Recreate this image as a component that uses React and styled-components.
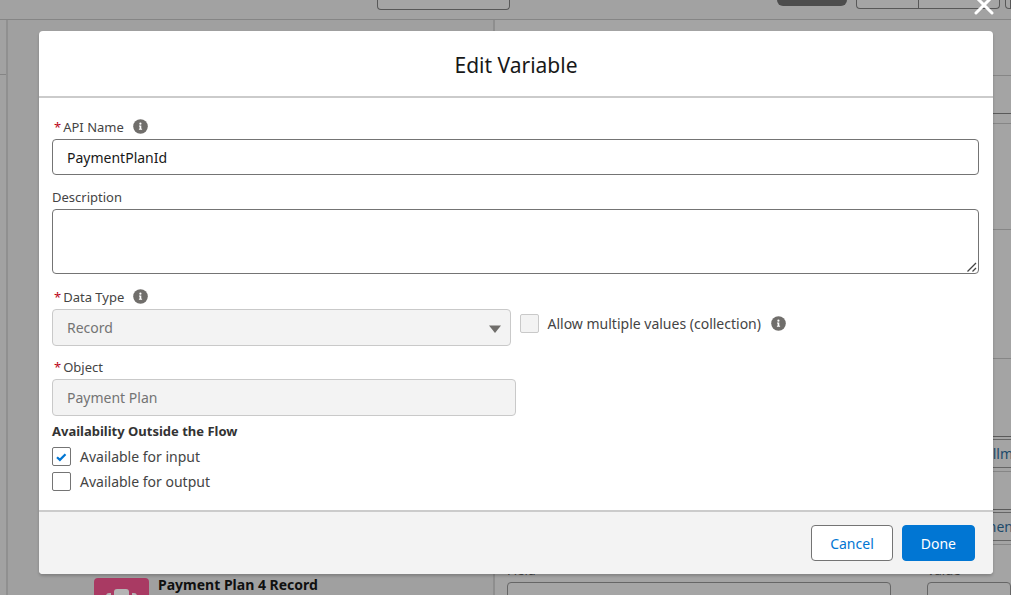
import React from "react";
import styled, { createGlobalStyle, css } from "styled-components";

const GlobalStyle = createGlobalStyle`
  *, *::before, *::after { box-sizing: border-box; }
  body { margin: 0; }
  body, button, input, textarea, select {
    font-family: "Noto Sans", "Open Sans", sans-serif;
    font-size: 14px;
  }
`;

const Page = styled.div`
  position: relative;
  display: flex;
  flex-direction: column;
  height: 100vh;
  overflow: hidden;
  background: #a2a2a2;
  color: #444;
`;

/* Flow builder behind the dialog */
const Toolbar = styled.header`
  display: flex;
  flex: none;
  align-items: flex-start;
  height: 20px;
  padding-left: 377px;
  border-bottom: 1px solid #858585;
`;

const ToolbarButton = styled.button`
  flex: none;
  width: ${(p) => p.$width}px;
  height: ${(p) => p.$height || 9}px;
  padding: 0;
  margin-left: ${(p) => p.$gap || 0}px;
  border: 1px solid #585858;
  border-top: 0;
  border-left-width: ${(p) => (p.$joined ? 0 : 1)}px;
  border-radius: ${(p) => p.$radius || "0 0 4px 4px"};
  background: #a5a5a5;
`;

const StatusPill = styled.span`
  width: 70px;
  height: 6px;
  margin-left: auto;
  border-radius: 0 0 12px 12px;
  background: #4d4d4d;
`;

const Workspace = styled.div`
  display: flex;
  flex: 1;
  min-height: 0;
`;

const Rail = styled.aside`
  flex: none;
  width: 8px;
  border-right: 2px solid #909090;
`;

const RailHeader = styled.div`
  height: 55px;
  border-bottom: 1px solid #858585;
`;

const Canvas = styled.section`
  position: relative;
  flex: none;
  width: 485px;
  overflow: hidden;
  background: #a0a0a0;
`;

const FlowNode = styled.div`
  position: absolute;
  left: 86px;
  top: 558px;
  display: flex;
  gap: 9px;
  color: #101010;
  font-size: 14px;
  font-weight: 700;
  line-height: 13px;
  white-space: nowrap;
`;

const NodeIcon = styled.span`
  display: block;
  width: 55px;
  height: 55px;
  border-radius: 4px;
  background: #a93a63;
`;

const Panel = styled.aside`
  flex: 1;
  min-width: 0;
  overflow: hidden;
  border-left: 2px solid #8e8e8e;
  background: #a4a4a4;
`;

const PanelSection = styled.div`
  height: ${(p) => p.$height}px;
  border-bottom: 1px solid ${(p) => (p.$strong ? "#5a5a5a" : "#868686")};
`;

const ResourceRow = styled.div`
  display: flex;
  align-items: center;
  justify-content: flex-end;
  height: 29px;
  margin: 2px -2px 3px 0;
  border: solid #666;
  border-width: 1px 0;
`;

const ResourceLink = styled.a`
  color: #1d4a6b;
  text-decoration: none;
`;

const Assignment = styled.div`
  display: grid;
  grid-template-columns: 384px 1fr;
  gap: 36px;
  padding: 17px 0 0 12px;
`;

const AssignmentField = styled.label`
  display: flex;
  flex-direction: column;
  gap: 4px;
  font-size: 13px;
  line-height: 16px;
`;

const AssignmentInput = styled.input`
  width: 100%;
  height: 36px;
  border: 1px solid #666;
  border-radius: 4px;
  background: #a5a5a5;
`;

/* Dialog */
const Overlay = styled.div`
  position: absolute;
  inset: 0;
  padding: 31px 18px 21px 39px;
`;

const CloseButton = styled.button`
  position: absolute;
  top: -5px;
  right: 17px;
  width: 20px;
  height: 20px;
  padding: 0;
  border: 0;
  background: none;
  svg { display: block; }
`;

const Dialog = styled.form`
  border-radius: 4px;
  background: #fff;
  box-shadow: 0 2px 3px rgba(0, 0, 0, 0.2);
`;

const DialogHeader = styled.header`
  padding: 21px 16px 18px;
  border-bottom: 2px solid #cbcbcb;
  text-align: center;
`;

const Title = styled.h2`
  margin: 0;
  color: #181818;
  font-size: 21px;
  font-weight: 400;
  line-height: 26px;
`;

const DialogBody = styled.div`
  padding: 19px 14px 16px 13px;
`;

const Field = styled.div`
  display: flex;
  flex-direction: column;
`;

const LabelRow = styled.div`
  display: flex;
  align-items: center;
  gap: 9px;
  height: 22px;
  margin-top: ${(p) => p.$gap || 0}px;
  padding-bottom: 3px;
`;

const Label = styled.label`
  color: #444;
  font-size: 13px;
  line-height: 20px;
`;

const Required = styled.abbr`
  margin: 0 2px;
  color: #ba0517;
`;

const control = css`
  display: block;
  width: 100%;
  border: 1px solid #747474;
  border-radius: 4px;
  background: #fff;
  color: #181818;
  font-size: 14px;
  &:disabled {
    border-color: #c9c9c9;
    background: #f3f3f3;
    color: #747474;
    opacity: 1;
  }
`;

const TextInput = styled.input`
  ${control}
  height: ${(p) => (p.disabled ? 37 : 36)}px;
  padding: 0 14px;
`;

const TextAreaBox = styled.div`
  position: relative;
  svg {
    position: absolute;
    right: 2px;
    bottom: 2px;
    pointer-events: none;
  }
`;

const TextArea = styled.textarea`
  ${control}
  height: 65px;
  padding: 8px 14px;
  &::-webkit-resizer { background: transparent; }
`;

const SelectBox = styled.div`
  position: relative;
  svg {
    position: absolute;
    top: 16px;
    right: 9px;
    pointer-events: none;
  }
`;

const Select = styled.select`
  ${control}
  appearance: none;
  height: 37px;
  padding: 0 14px;
`;

const Columns = styled.div`
  display: grid;
  grid-template-columns: 1fr 1fr;
`;

const TypeColumn = styled(Field)`
  padding-right: 5px;
`;

const CollectionColumn = styled.div`
  display: flex;
  align-items: center;
  gap: 10px;
  padding: 26px 0 0 4px;
`;

const Group = styled.fieldset`
  min-width: 0;
  margin: 0;
  padding: 0;
  border: 0;
`;

const Legend = styled.legend`
  padding: 5px 0 3px;
  color: #333;
  font-size: 13px;
  font-weight: 700;
  line-height: 20px;
`;

const CheckLabel = styled.label`
  display: flex;
  align-items: center;
  gap: 9px;
  height: 25px;
  color: #444;
  font-size: 14px;
`;

const CheckBox = styled.span`
  position: relative;
  flex: none;
  width: 19px;
  height: 19px;
  input {
    display: block;
    appearance: none;
    width: 19px;
    height: 19px;
    margin: 0;
    border: 1px solid #747474;
    border-radius: 2px;
    background: #fff;
  }
  input:disabled {
    border-color: #c9c9c9;
    background: #f3f3f3;
  }
  svg {
    position: absolute;
    inset: 0;
    visibility: hidden;
    pointer-events: none;
  }
  input:checked + svg { visibility: visible; }
`;

const DialogFooter = styled.footer`
  display: flex;
  justify-content: flex-end;
  gap: 9px;
  padding: 13px 18px;
  border-top: 2px solid #cbcbcb;
  border-radius: 0 0 4px 4px;
  background: #f3f3f3;
`;

const Button = styled.button`
  height: 36px;
  padding: 0 18px;
  border: 1px solid ${(p) => (p.$primary ? "#0176d3" : "#747474")};
  border-radius: 4px;
  background: ${(p) => (p.$primary ? "#0176d3" : "#fff")};
  color: ${(p) => (p.$primary ? "#fff" : "#0176d3")};
`;

const HelpButton = styled.button`
  padding: 0;
  border: 0;
  background: none;
  svg { display: block; }
`;

function Help({ label }) {
  return (
    <HelpButton type="button" aria-label={label}>
      <svg width="15" height="15" viewBox="0 0 15 15">
        <circle cx="7.5" cy="7.5" r="7.3" fill="#706e6b" />
        <circle cx="7.4" cy="4.7" r="1.1" fill="#fff" />
        <path d="M6 6.5h2.3v3.3h.8v1H5.9v-1h.7V7.5H6z" fill="#fff" />
      </svg>
    </HelpButton>
  );
}

function Check({ children, ...rest }) {
  return (
    <CheckLabel>
      <CheckBox>
        <input type="checkbox" {...rest} />
        <svg width="19" height="19" viewBox="0 0 19 19" fill="none">
          <path d="M5 10.2l2.9 2.7 5.6-5.6" stroke="#0176d3" strokeWidth="2.2" />
        </svg>
      </CheckBox>
      {children}
    </CheckLabel>
  );
}

export default function App() {
  return (
    <Page>
      <GlobalStyle />
      <Toolbar>
        <ToolbarButton $width={133} $height={10} aria-label="Select elements" />
        <StatusPill />
        <ToolbarButton $width={63} $gap={9} $radius="0 0 0 4px" aria-label="Run" />
        <ToolbarButton $width={81} $joined $radius="0 0 4px 0" aria-label="Debug" />
        <ToolbarButton $width={6} $gap={5} $radius="0 0 0 4px" aria-label="Save" />
      </Toolbar>
      <Workspace>
        <Rail><RailHeader /></Rail>
        <Canvas>
          <FlowNode>
            <NodeIcon>
              <svg width="55" height="55" viewBox="0 0 55 55" fill="#b5b5b5">
                <rect x="20" y="11" width="15" height="32" rx="3" />
                <path d="M17 15v25h-2a3 3 0 0 1-3-3V18a3 3 0 0 1 3-3zM38 15v25h2a3 3 0 0 0 3-3V18a3 3 0 0 0-3-3z" />
              </svg>
            </NodeIcon>
            Payment Plan 4 Record
          </FlowNode>
        </Canvas>
        <Panel>
          <PanelSection $height={56} />
          <PanelSection $height={38} $strong />
          <PanelSection $height={10} />
          <PanelSection $height={106} />
          <PanelSection $height={129} />
          <PanelSection $height={78} $strong />
          <ResourceRow><ResourceLink href="#installment">llm</ResourceLink></ResourceRow>
          <PanelSection $height={1} />
          <PanelSection $height={38} $strong />
          <ResourceRow><ResourceLink href="#payment">men</ResourceLink></ResourceRow>
          <PanelSection $height={1} />
          <Assignment>
            <AssignmentField>Field<AssignmentInput /></AssignmentField>
            <AssignmentField>Value<AssignmentInput /></AssignmentField>
          </Assignment>
        </Panel>
      </Workspace>

      <Overlay>
        <CloseButton type="button" aria-label="Close">
          <svg width="20" height="20" viewBox="0 0 20 20" stroke="#fff" strokeWidth="3" strokeLinecap="round">
            <path d="M2 2l16 16M18 2L2 18" />
          </svg>
        </CloseButton>
        <Dialog role="dialog" aria-labelledby="dialog-title" onSubmit={(e) => e.preventDefault()}>
          <DialogHeader>
            <Title id="dialog-title">Edit Variable</Title>
          </DialogHeader>
          <DialogBody>
            <Field>
              <LabelRow>
                <Label htmlFor="api-name"><Required>*</Required>API Name</Label>
                <Help label="API Name help" />
              </LabelRow>
              <TextInput id="api-name" defaultValue="PaymentPlanId" />
            </Field>
            <Field>
              <LabelRow $gap={12}>
                <Label htmlFor="description">Description</Label>
              </LabelRow>
              <TextAreaBox>
                <TextArea id="description" />
                <svg width="10" height="10" viewBox="0 0 10 10" stroke="#444" strokeWidth="1.3">
                  <path d="M.5 9.5l8.500-8.500M5.500 9.500l3.500-3.500" />
                </svg>
              </TextAreaBox>
            </Field>
            <Columns>
              <TypeColumn>
                <LabelRow $gap={13}>
                  <Label htmlFor="data-type"><Required>*</Required>Data Type</Label>
                  <Help label="Data Type help" />
                </LabelRow>
                <SelectBox>
                  <Select id="data-type" disabled defaultValue="record">
                    <option value="record">Record</option>
                  </Select>
                  <svg width="14" height="8" viewBox="0 0 14 8">
                    <path d="M1 .5h12L7 8z" fill="#706e6b" />
                  </svg>
                </SelectBox>
              </TypeColumn>
              <CollectionColumn>
                <Check disabled>Allow multiple values (collection)</Check>
                <Help label="Collection help" />
              </CollectionColumn>
              <Field>
                <LabelRow $gap={11}>
                  <Label htmlFor="object"><Required>*</Required>Object</Label>
                </LabelRow>
                <TextInput id="object" disabled defaultValue="Payment Plan" />
              </Field>
            </Columns>
            <Group>
              <Legend>Availability Outside the Flow</Legend>
              <Check defaultChecked>Available for input</Check>
              <Check>Available for output</Check>
            </Group>
          </DialogBody>
          <DialogFooter>
            <Button type="button">Cancel</Button>
            <Button type="submit" $primary>Done</Button>
          </DialogFooter>
        </Dialog>
      </Overlay>
    </Page>
  );
}
